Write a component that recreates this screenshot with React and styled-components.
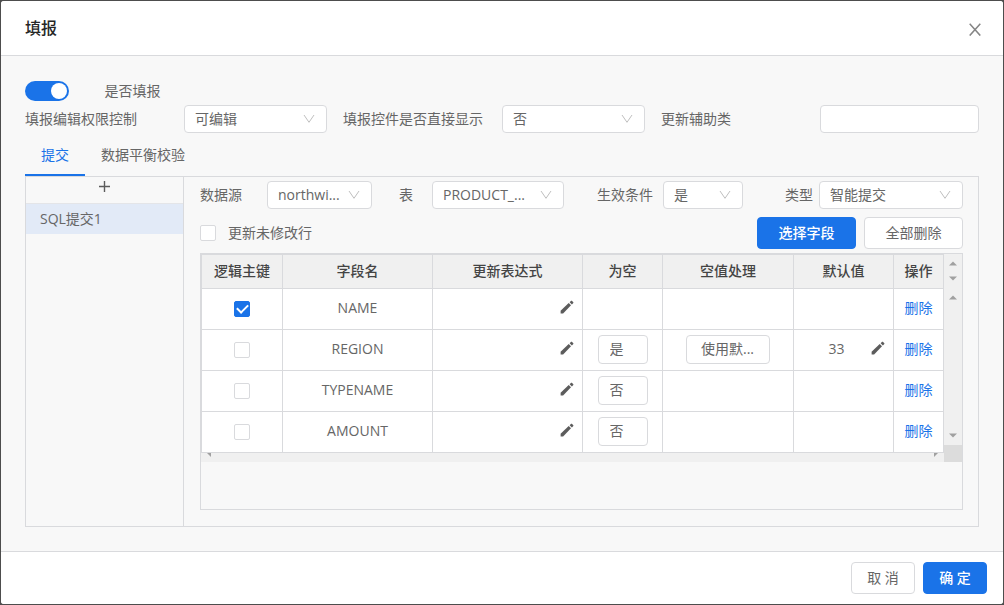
import styled, { createGlobalStyle } from 'styled-components';

const fields = [
  { name: 'NAME', isKey: true },
  { name: 'REGION', nullable: '是', nullRule: '使用默...', defaultValue: '33' },
  { name: 'TYPENAME', nullable: '否' },
  { name: 'AMOUNT', nullable: '否' },
];

const columns = [
  { title: '逻辑主键', width: 81 },
  { title: '字段名', width: 150 },
  { title: '更新表达式', width: 150 },
  { title: '为空', width: 80 },
  { title: '空值处理', width: 131 },
  { title: '默认值', width: 100 },
  { title: '操作', width: 50 },
];

function Dropdown({ id, value, label }) {
  return (
    <SelectWrap>
      <Select id={id} defaultValue={value} aria-label={label}>
        <option>{value}</option>
      </Select>
      <svg width="12" height="12" viewBox="0 0 12 12" fill="none" stroke="#bfbfbf">
        <path d="M1 2L6 9.3L11 2" />
      </svg>
    </SelectWrap>
  );
}

function EditButton({ label }) {
  return (
    <IconButton type="button" aria-label={label}>
      <svg width="14" height="14" viewBox="0 0 14 14" fill="#5c5c5c">
        <path d="M0.6 13.4V10.8L8.7 3L11 5.2L3.1 13.4Z" />
        <path d="M9.6 2.2L11.1 0.8Q11.5 0.5 11.9 0.8L13.3 2.2Q13.6 2.6 13.3 3L11.9 4.4Z" />
      </svg>
    </IconButton>
  );
}

function Arrow({ d }) {
  return (
    <svg width="8" height="5" viewBox="0 0 8 5" fill="#a0a0a0">
      <path d={d} />
    </svg>
  );
}

const UP = 'M0 4.5L4 0.5L8 4.5Z';
const DOWN = 'M0 0.5L4 4.5L8 0.5Z';

function App() {
  return (
    <>
      <GlobalStyle />
      <Dialog role="dialog" aria-labelledby="dialog-title">
        <Header>
          <h1 id="dialog-title">填报</h1>
          <CloseButton type="button" aria-label="关闭">
            <svg width="12" height="13" viewBox="0 0 12 13" fill="none" stroke="#858585" strokeWidth="1.5">
              <path d="M0.7 0.8L11.3 12.6M11.3 0.8L0.7 12.6" />
            </svg>
          </CloseButton>
        </Header>

        <Body>
          <SwitchRow>
            <Switch id="enabled" type="checkbox" role="switch" defaultChecked />
            <label htmlFor="enabled">是否填报</label>
          </SwitchRow>
          <FormRow>
            <label htmlFor="permission">填报编辑权限控制</label>
            <FormField><Dropdown id="permission" value="可编辑" /></FormField>
            <label htmlFor="direct">填报控件是否直接显示</label>
            <FormField><Dropdown id="direct" value="否" /></FormField>
            <label htmlFor="helper">更新辅助类</label>
            <TextInput id="helper" type="text" />
          </FormRow>

          <Tabs role="tablist">
            <Tab type="button" role="tab" aria-selected="true" $active>提交</Tab>
            <Tab type="button" role="tab" aria-selected="false">数据平衡校验</Tab>
          </Tabs>

          <Panel>
            <Sidebar>
              <AddButton type="button" aria-label="新增">
                <svg width="11" height="11" viewBox="0 0 11 11" stroke="#5c5c5c" strokeWidth="1.4">
                  <path d="M5.5 0V11M0 5.5H11" />
                </svg>
              </AddButton>
              <SubmitItem type="button">SQL提交1</SubmitItem>
            </Sidebar>

            <Content>
              <SourceRow>
                <label htmlFor="source">数据源</label>
                <Dropdown id="source" value="northwi..." />
                <EndLabel htmlFor="table" $space={19}>表</EndLabel>
                <Dropdown id="table" value="PRODUCT_..." />
                <EndLabel htmlFor="condition" $space={10}>生效条件</EndLabel>
                <Dropdown id="condition" value="是" />
                <EndLabel htmlFor="kind" $space={6}>类型</EndLabel>
                <Dropdown id="kind" value="智能提交" />
              </SourceRow>

              <ActionRow>
                <CheckLabel>
                  <Checkbox type="checkbox" />
                  更新未修改行
                </CheckLabel>
                <Button type="button" $primary $wide>选择字段</Button>
                <Button type="button" $wide>全部删除</Button>
              </ActionRow>

              <TableBox>
                <TableArea>
                  <TableMain>
                    <Table>
                      <colgroup>
                        {columns.map((column) => (
                          <col key={column.title} width={column.width} />
                        ))}
                      </colgroup>
                      <thead>
                        <tr>
                          {columns.map((column) => (
                            <th key={column.title} scope="col">{column.title}</th>
                          ))}
                        </tr>
                      </thead>
                      <tbody>
                        {fields.map((field) => (
                          <tr key={field.name}>
                            <td>
                              <Checkbox type="checkbox" defaultChecked={field.isKey} aria-label={`${field.name} 逻辑主键`} />
                            </td>
                            <td>{field.name}</td>
                            <td>
                              <EditCell>
                                <span />
                                <EditButton label={`${field.name} 更新表达式`} />
                              </EditCell>
                            </td>
                            <td>
                              {field.nullable && (
                                <CellSelect defaultValue={field.nullable} aria-label={`${field.name} 为空`}>
                                  <option>{field.nullable}</option>
                                </CellSelect>
                              )}
                            </td>
                            <td>
                              {field.nullRule && (
                                <CellSelect defaultValue={field.nullRule} aria-label={`${field.name} 空值处理`} $wide>
                                  <option>{field.nullRule}</option>
                                </CellSelect>
                              )}
                            </td>
                            <td>
                              {field.defaultValue && (
                                <EditCell>
                                  <span>{field.defaultValue}</span>
                                  <EditButton label={`${field.name} 默认值`} />
                                </EditCell>
                              )}
                            </td>
                            <td><a href="#delete">删除</a></td>
                          </tr>
                        ))}
                      </tbody>
                    </Table>
                    <BottomBar>
                      <svg width="4" height="4" viewBox="0 0 4 4" fill="#a0a0a0"><path d="M0 0H4V4Z" /></svg>
                      <svg width="4" height="4" viewBox="0 0 4 4" fill="#a0a0a0"><path d="M0 0H4L0 4Z" /></svg>
                    </BottomBar>
                  </TableMain>
                  <SideBar>
                    <SideTrack $head>
                      <Arrow d={UP} />
                      <Arrow d={DOWN} />
                    </SideTrack>
                    <SideTrack>
                      <Arrow d={UP} />
                      <Arrow d={DOWN} />
                    </SideTrack>
                    <Corner />
                  </SideBar>
                </TableArea>
              </TableBox>
            </Content>
          </Panel>
        </Body>

        <Footer>
          <Button type="button">取 消</Button>
          <Button type="button" $primary>确 定</Button>
        </Footer>
      </Dialog>
    </>
  );
}

const GlobalStyle = createGlobalStyle`
  * {
    box-sizing: border-box;
  }

  body {
    margin: 0;
    padding: 1px;
    background: #4d4d4d;
    color: #666;
    font-family: 'Open Sans', 'Noto Sans CJK SC', sans-serif;
    font-size: 14px;
    line-height: 20px;
  }

  button, input, select {
    font: inherit;
    color: inherit;
    margin: 0;
  }

  button {
    cursor: pointer;
  }

  a {
    color: #1a73e8;
    text-decoration: none;
  }
`

const Dialog = styled.div`
  display: flex;
  flex-direction: column;
  min-height: calc(100vh - 2px);
  background: #f8f8f8;
  border-radius: 3px;
  overflow: hidden;
`

const Header = styled.header`
  display: flex;
  align-items: center;
  justify-content: space-between;
  height: 55px;
  padding: 0 22px 0 24px;
  background: #fff;
  border-bottom: 1px solid #d9dadd;

  h1 {
    margin: 0;
    font-size: 16px;
    font-weight: 500;
    color: #262626;
  }
`

const CloseButton = styled.button`
  display: flex;
  padding: 2px 0 0;
  border: 0;
  background: none;
`

const Body = styled.main`
  display: flex;
  flex: 1;
  flex-direction: column;
  padding: 25px 24px 24px;
`

const SwitchRow = styled.div`
  display: grid;
  grid-template-columns: repeat(12, 1fr);
  margin-bottom: 4px;

  label {
    white-space: nowrap;
  }
`

const Switch = styled.input`
  appearance: none;
  width: 44px;
  height: 20px;
  padding: 2px;
  border-radius: 10px;
  background: #bfbfbf;

  &::before {
    content: '';
    display: block;
    width: 16px;
    height: 16px;
    border-radius: 50%;
    background: #fff;
  }

  &:checked {
    background: #1a73e8;
  }

  &:checked::before {
    margin-left: 24px;
  }
`

const FormRow = styled.div`
  display: grid;
  grid-template-columns: repeat(6, 1fr);
  align-items: center;
`

const FormField = styled.div`
  padding-right: 16px;
`

const SelectWrap = styled.div`
  position: relative;

  svg {
    position: absolute;
    top: 8px;
    right: 12px;
    pointer-events: none;
  }
`

const Select = styled.select`
  display: block;
  appearance: none;
  width: 100%;
  height: 28px;
  padding: 0 24px 0 10px;
  border: 1px solid #d9dadd;
  border-radius: 4px;
  background: #fff;
`

const TextInput = styled.input`
  width: 100%;
  height: 28px;
  padding: 0 10px;
  border: 1px solid #d9dadd;
  border-radius: 4px;
  background: #fff;
`

const Tabs = styled.div`
  display: flex;
  height: 43px;
`

const Tab = styled.button`
  padding: 2px 16px 0;
  border: 0;
  border-bottom: 2px solid ${({ $active }) => ($active ? '#1a73e8' : 'transparent')};
  background: none;
  color: ${({ $active }) => ($active ? '#1a73e8' : 'inherit')};
`

const Panel = styled.div`
  display: grid;
  grid-template-columns: 158px 1fr;
  flex: 1;
  border: 1px solid #d9dadd;
`

const Sidebar = styled.aside`
  border-right: 1px solid #d9dadd;
`

const AddButton = styled.button`
  display: flex;
  align-items: center;
  justify-content: center;
  width: 100%;
  height: 27px;
  padding: 0 0 8px;
  border: 0;
  border-bottom: 1px solid #e4e5e8;
  background: none;
`

const SubmitItem = styled.button`
  display: block;
  width: 100%;
  height: 30px;
  padding: 0 14px;
  border: 0;
  background: #e2eaf7;
  text-align: left;
`

const Content = styled.section`
  display: flex;
  flex-direction: column;
  min-width: 0;
  padding: 4px 15px 16px 16px;
`

const SourceRow = styled.div`
  display: grid;
  grid-template-columns: 67fr 105fr 60fr 132fr 99fr 80fr 76fr 144fr;
  align-items: center;
`

const EndLabel = styled.label`
  padding-right: ${({ $space }) => $space}px;
  text-align: right;
  white-space: nowrap;
`

const ActionRow = styled.div`
  display: flex;
  align-items: center;
  gap: 8px;
  margin: 8px 0 4px;
`

const CheckLabel = styled.label`
  display: flex;
  align-items: center;
  gap: 12px;
  margin-right: auto;
`

const Checkbox = styled.input`
  appearance: none;
  display: inline-grid;
  place-items: center;
  width: 16px;
  height: 16px;
  border: 1px solid #d9dadd;
  border-radius: 2px;
  background: #fff;
  vertical-align: middle;

  &:checked {
    border-color: #1a73e8;
    background: #1a73e8;
  }

  &:checked::before {
    content: '';
    width: 9px;
    height: 5px;
    margin-bottom: 3px;
    border: solid #fff;
    border-width: 0 0 2px 2px;
    transform: rotate(-45deg);
  }
`

const Button = styled.button`
  height: 32px;
  min-width: ${({ $wide }) => ($wide ? 99 : 64)}px;
  padding: 0 15px;
  border: 1px solid ${({ $primary }) => ($primary ? '#1a73e8' : '#d9dadd')};
  border-radius: 4px;
  background: ${({ $primary }) => ($primary ? '#1a73e8' : '#fff')};
  color: ${({ $primary }) => ($primary ? '#fff' : '#666')};
  font-weight: ${({ $primary }) => ($primary ? 500 : 400)};
`

const TableBox = styled.div`
  flex: 1;
  border: 1px solid #d9dadd;
`

const TableArea = styled.div`
  display: flex;
`

const TableMain = styled.div`
  flex: 1;
  min-width: 0;
`

const Table = styled.table`
  width: 100%;
  table-layout: fixed;
  border-spacing: 0;
  border-top: 1px solid #d9dadd;
  border-left: 1px solid #d9dadd;

  th, td {
    padding: 0 0 2px;
    border-right: 1px solid #d9dadd;
    border-bottom: 1px solid #d9dadd;
    text-align: center;
  }

  th {
    height: 34px;
    background: #f0f0f0;
    color: #444;
    font-weight: 500;
  }

  td {
    height: 41px;
    background: #fff;
  }
`

const EditCell = styled.div`
  display: grid;
  grid-template-columns: 1fr auto;
  align-items: center;
  padding: 0 8px;
`

const IconButton = styled.button`
  display: flex;
  padding: 0 0 3px;
  border: 0;
  background: none;
`

const CellSelect = styled.select`
  appearance: none;
  width: ${({ $wide }) => ($wide ? 84 : 50)}px;
  height: 29px;
  padding: 0 0 0 ${({ $wide }) => ($wide ? 14 : 11)}px;
  border: 1px solid #d9dadd;
  border-radius: 4px;
  background: #fff;
  vertical-align: middle;
`

const BottomBar = styled.div`
  display: flex;
  justify-content: space-between;
  height: 9px;
  padding: 0 6px;
  background: #f0f0f0;
`

const SideBar = styled.div`
  display: flex;
  flex: none;
  flex-direction: column;
  width: 18px;
  background: #f0f0f0;
`

const SideTrack = styled.div`
  display: flex;
  flex-direction: column;
  align-items: center;
  justify-content: space-between;
  flex: ${({ $head }) => ($head ? '0 0 34px' : '1')};
  padding: 7px 0;
`

const Corner = styled.div`
  height: 17px;
  background: #dcdcdc;
`

const Footer = styled.footer`
  display: flex;
  align-items: center;
  justify-content: flex-end;
  gap: 8px;
  height: 53px;
  padding: 0 16px;
  background: #fff;
  border-top: 1px solid #d9dadd;
`

export default App;
